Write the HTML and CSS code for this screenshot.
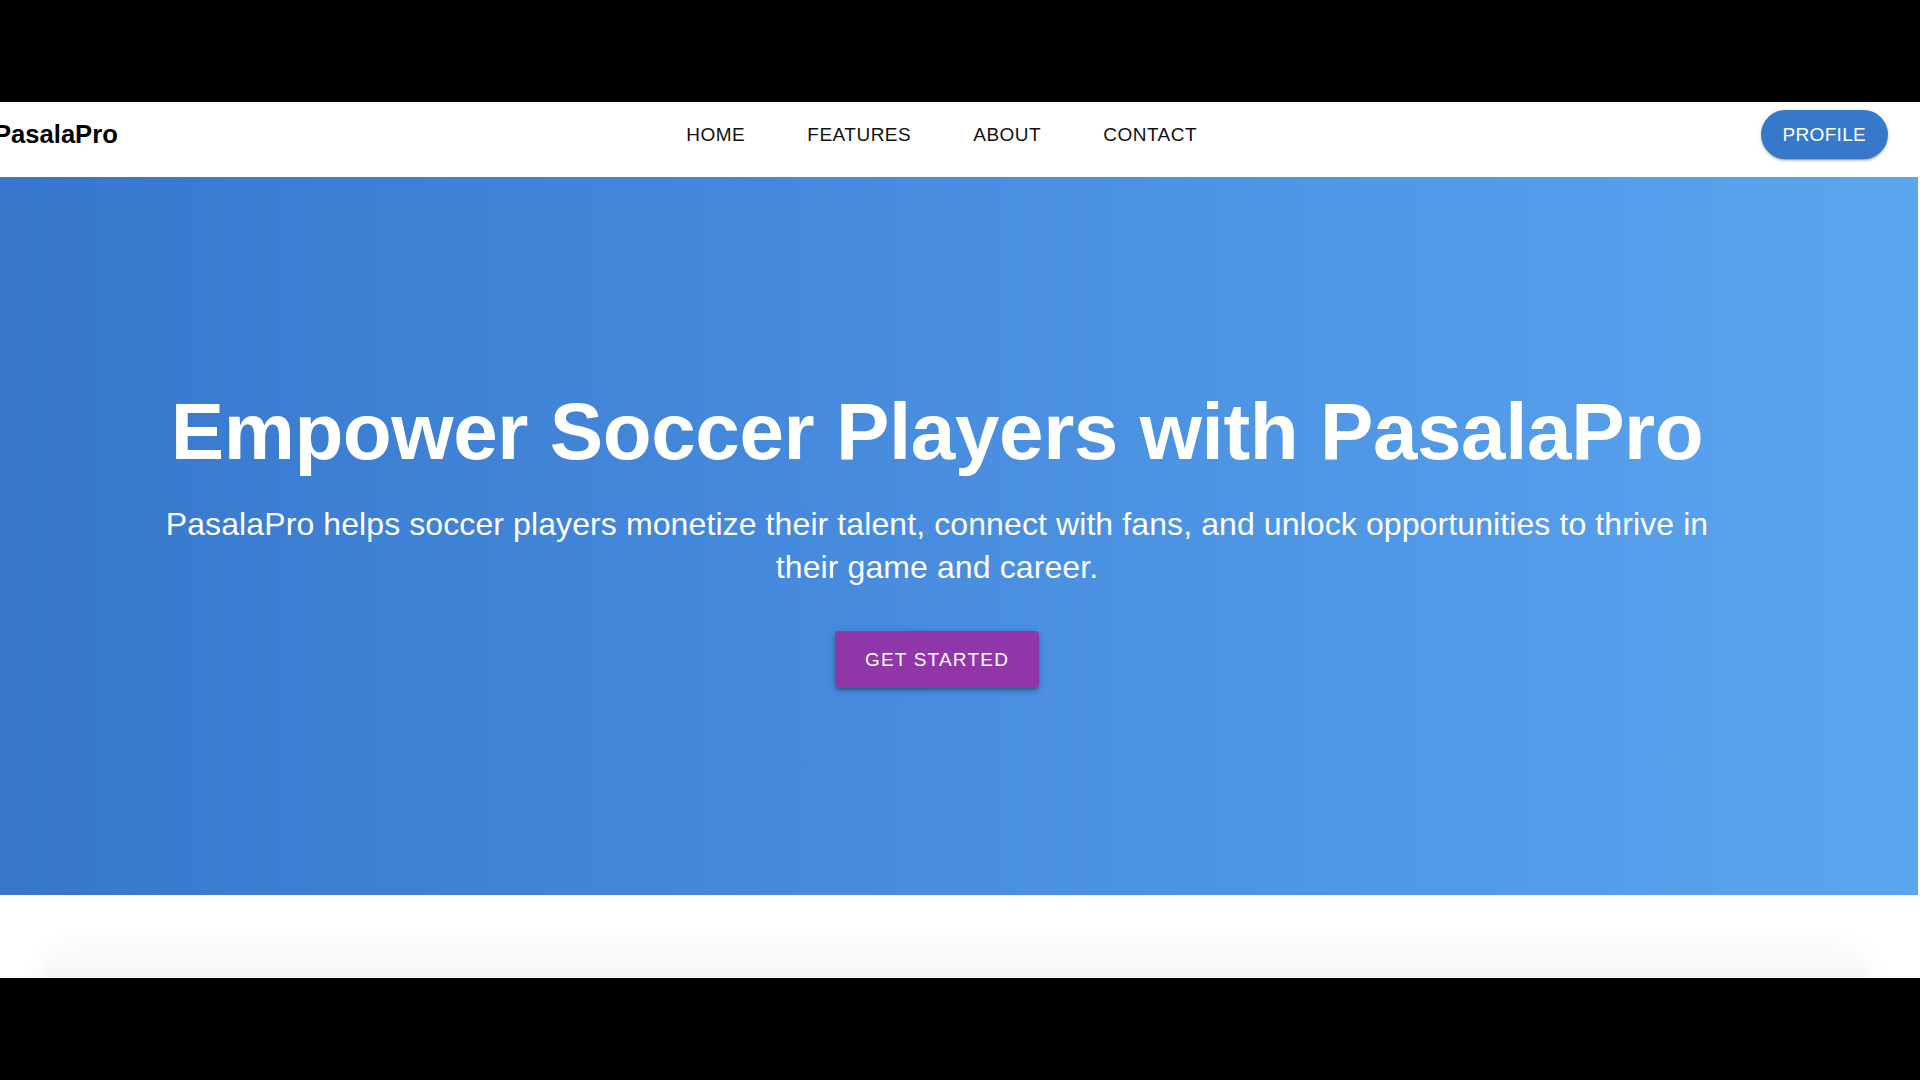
FILE: index.html
```html
<!DOCTYPE html>
<html lang="en">
<head>
<meta charset="utf-8">
<title>PasalaPro</title>
<link rel="stylesheet" href="styles.css">
</head>
<body>
<div class="screen">
  <div class="bar"></div>
  <div class="frame">
    <header class="navbar">
      <div class="logo">PasalaPro</div>
      <nav class="nav">
        <a href="#">Home</a>
        <a href="#">Features</a>
        <a href="#">About</a>
        <a href="#">Contact</a>
      </nav>
      <button class="profile">Profile</button>
    </header>
    <section class="hero">
      <h1 class="hero-title">Empower Soccer Players with PasalaPro</h1>
      <p class="hero-text">PasalaPro helps soccer players monetize their talent, connect with fans, and unlock opportunities to thrive in their game and career.</p>
      <button class="cta">Get Started</button>
    </section>
    <section class="below">
      <div class="card"></div>
    </section>
  </div>
  <div class="bar"></div>
</div>
</body>
</html>
```

FILE: styles.css
```css
html, body {
  margin: 0;
  padding: 0;
  background: #000;
  font-family: "Liberation Sans", Arial, Helvetica, sans-serif;
}

.screen {
  width: 1920px;
  height: 1080px;
  display: flex;
  flex-direction: column;
  overflow: hidden;
}

.bar {
  flex: none;
  height: 102px;
  background: #000;
}

.frame {
  flex: none;
  height: 876px;
  background: #fff;
  overflow: hidden;
  display: flex;
  flex-direction: column;
}

.navbar {
  flex: none;
  height: 75px;
  box-sizing: border-box;
  padding: 0 32px 10px 0;
  display: flex;
  align-items: center;
  justify-content: space-between;
  background: #fff;
}

.logo {
  margin-left: -6px;
  font-size: 25.6px;
  font-weight: 700;
  color: #000;
  line-height: 1.2;
}

.nav {
  display: flex;
  gap: 62px;
  margin-left: 5px;
}

.nav a {
  font-size: 19px;
  letter-spacing: 0.5px;
  color: #111;
  text-decoration: none;
  text-transform: uppercase;
  line-height: 1.75;
}

.profile {
  border: none;
  background: #3578cc;
  color: #fff;
  border-radius: 999px;
  padding: 8px 22px;
  font-family: inherit;
  font-size: 19px;
  line-height: 33px;
  letter-spacing: 0.3px;
  text-transform: uppercase;
  box-shadow: 0 3px 1px -2px rgba(0,0,0,0.2), 0 2px 2px 0 rgba(0,0,0,0.14), 0 1px 5px 0 rgba(0,0,0,0.12);
}

.hero {
  flex: none;
  height: 718px;
  margin-right: 2px;
  box-sizing: border-box;
  padding: 0 44px 0 0;
  background: linear-gradient(90deg, #3677cc 0%, #4589dc 40%, #5ba5f0 100%);
  display: flex;
  flex-direction: column;
  align-items: center;
  justify-content: center;
  color: #fff;
  text-align: center;
}

.hero-title {
  margin: 0 0 23px;
  font-size: 80px;
  line-height: 96px;
  font-weight: 700;
  letter-spacing: -0.4px;
}

.hero-text {
  margin: 0 0 43px;
  max-width: 1580px;
  font-size: 32px;
  line-height: 42.67px;
  letter-spacing: 0.1px;
}

.cta {
  border: none;
  background: #9136a8;
  color: #fff;
  border-radius: 4px;
  padding: 12px 30px;
  font-family: inherit;
  font-size: 19px;
  line-height: 33px;
  letter-spacing: 1.2px;
  text-transform: uppercase;
  box-shadow: 0 3px 3px -2px rgba(0,0,0,0.25), 0 3px 4px 0 rgba(0,0,0,0.16), 0 1px 8px 0 rgba(0,0,0,0.12);
}

.below {
  flex: 1;
  padding: 53px 53px 0 43px;
  background: #fff;
}

.card {
  height: 240px;
  border-radius: 32px;
  background: linear-gradient(180deg, #fbfbfc 0%, #f4f5f7 40px, #f4f5f7 100%);
  box-shadow: 0 0 28px rgba(0,0,0,0.05);
}
```
